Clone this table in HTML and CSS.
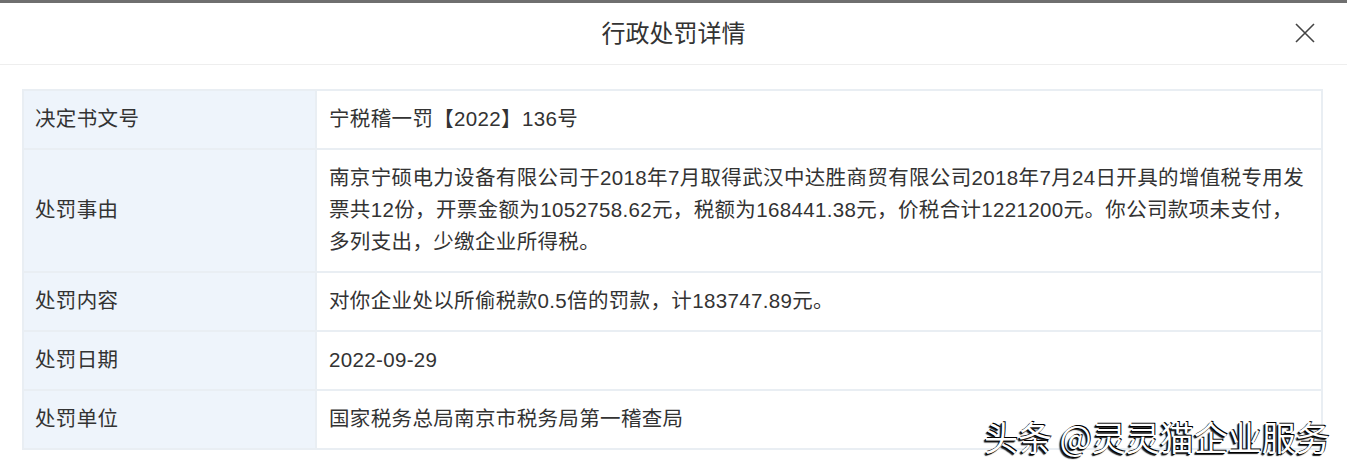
FILE: index.html
```html
<!DOCTYPE html>
<html lang="zh-CN">
<head>
    <meta charset="UTF-8">
    <meta name="viewport" content="width=device-width, initial-scale=1.0">
    <title>行政处罚详情</title>
    <link rel="stylesheet" href="styles.css">
</head>
<body>
    <div class="topbar"></div>
    <div class="dialog">
        <div class="dialog-header">
            <h2 class="dialog-title">行政处罚详情</h2>
            <button class="close" type="button" aria-label="关闭">
                <svg width="20" height="20" viewBox="0 0 20 20">
                    <path d="M1 1L19 19M19 1L1 19" stroke="#444" stroke-width="1.6" fill="none"/>
                </svg>
            </button>
        </div>
        <div class="dialog-body">
            <table class="detail">
                <tr>
                    <td class="label">决定书文号</td>
                    <td class="value">宁税稽一罚【2022】136号</td>
                </tr>
                <tr>
                    <td class="label">处罚事由</td>
                    <td class="value">南京宁硕电力设备有限公司于2018年7月取得武汉中达胜商贸有限公司2018年7月24日开具的增值税专用发票共12份，开票金额为1052758.62元，税额为168441.38元，价税合计1221200元。你公司款项未支付，多列支出，少缴企业所得税。</td>
                </tr>
                <tr>
                    <td class="label">处罚内容</td>
                    <td class="value">对你企业处以所偷税款0.5倍的罚款，计183747.89元。</td>
                </tr>
                <tr>
                    <td class="label">处罚日期</td>
                    <td class="value">2022-09-29</td>
                </tr>
                <tr>
                    <td class="label">处罚单位</td>
                    <td class="value">国家税务总局南京市税务局第一稽查局</td>
                </tr>
            </table>
        </div>
    </div>
    <div class="watermark">头条 @灵灵猫企业服务</div>
</body>
</html>
```

FILE: styles.css
```css
body {
    margin: 0;
    font-family: "Liberation Sans", "Noto Sans CJK SC", sans-serif;
    color: #333;
    background: #fff;
}
.topbar {
    height: 3px;
    background-color: #6f6f6f;
}
.dialog-header {
    position: relative;
    height: 61px;
    border-bottom: 1px solid #eeeeee;
    display: flex;
    align-items: center;
    justify-content: center;
}
.dialog-title {
    margin: 0 0 5px 0;
    font-size: 24px;
    font-weight: normal;
    color: #333;
}
.close {
    position: absolute;
    right: 32px;
    top: 20px;
    padding: 0;
    border: none;
    background: none;
    cursor: pointer;
    line-height: 0;
}
.dialog-body {
    padding: 24px 24px 0 22px;
}
.detail {
    width: 100%;
    border-collapse: collapse;
    border: 2px solid #e9eef3;
    font-size: 20.5px;
    line-height: 32px;
    letter-spacing: 0.35px;
}
.detail td {
    border: 2px solid #e9eef3;
    padding: 12px 8px 13px 12px;
    vertical-align: middle;
}
.detail .label {
    width: 272px;
    padding-left: 11px;
    background-color: #eef4fb;
}
.watermark {
    position: absolute;
    left: 984px;
    top: 412px;
    font-family: "Noto Sans CJK SC", sans-serif;
    font-size: 34px;
    color: #fff;
    text-shadow: -1px 1px 0 #000, -2px 2px 1px #222, 1px -1px 0 #000;
    white-space: nowrap;
}
```
